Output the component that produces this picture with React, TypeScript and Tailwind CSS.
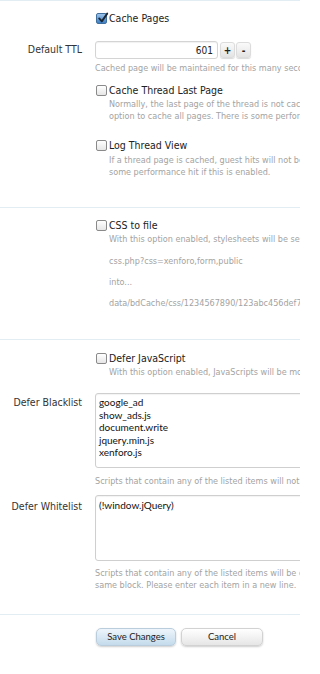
import React from "react";

const UI = "font-[family-name:'DejaVu_Sans_Condensed','DejaVu_Sans',sans-serif] font-stretch-condensed";
const HUM = "font-[family-name:Lato,'Open_Sans',sans-serif]";

function Box({ checked = false }: { checked?: boolean }) {
  return (
    <span
      className={
        "relative ml-[1px] inline-block h-[11px] w-[11px] shrink-0 rounded-[2px] border " +
        (checked
          ? "border-[#3f6f9f] bg-gradient-to-b from-[#9cc3ea] to-[#3f7fc4]"
          : "border-[#8a8a8a] bg-gradient-to-b from-white to-[#e6e6e6]")
      }
    >
      {checked && (
        <svg viewBox="0 0 12 12" className="absolute left-[0px] top-[-2px] h-[12px] w-[12px]">
          <path d="M2.2 6.4 L4.8 9.4 L10.2 1.6" fill="none" stroke="#1b2733" strokeWidth="1.9" strokeLinecap="round" strokeLinejoin="round" />
        </svg>
      )}
    </span>
  );
}

function CheckRow({ label, checked }: { label: string; checked?: boolean }) {
  return (
    <div className="flex h-[13px] items-center gap-[2px] whitespace-nowrap pl-[95px] text-[10.5px] leading-[13px] text-[#222]">
      <Box checked={checked} />
      <span>{label}</span>
    </div>
  );
}

function Desc({ lines, className = "" }: { lines: string[]; className?: string }) {
  return (
    <div className={"whitespace-nowrap pl-[109px] text-[9px] leading-[12px] text-[#a3a3a3] " + className}>
      {lines.map((l) => (
        <div key={l} className="h-[12px]">{l}</div>
      ))}
    </div>
  );
}

function Sep({ className = "" }: { className?: string }) {
  return <div className={"h-px w-full bg-[#e2ecf3] " + className} />;
}

export default function App() {
  return (
    <div className={"h-[674px] w-[300px] overflow-hidden bg-white " + UI}>
      <div className="w-[300px]">
        <Sep />
        <div className="pt-[11px]">
          <CheckRow label="Cache Pages" checked />
          <div className="mt-[16px] flex h-[18px] items-center whitespace-nowrap">
            <div className="w-[82px] shrink-0 text-right text-[10.5px] text-[#333]">Default TTL</div>
            <div className="ml-[13px] flex items-center">
              <div className="flex h-[18px] w-[123px] items-center justify-end rounded-[3px] border border-[#d4d4d4] bg-white pr-[4px] text-[10px] text-[#222] shadow-[inset_0_1px_1px_rgba(0,0,0,0.06)]">
                601
              </div>
              <div className="ml-[2px] flex h-[16px] w-[15px] items-center justify-center rounded-[3px] border border-[#dcdcdc] bg-gradient-to-b from-[#fafafa] to-[#e4e4e4] text-[10px] font-bold text-[#222] shadow-[0_1px_1px_rgba(0,0,0,0.15)]">
                +
              </div>
              <div className="ml-[1px] flex h-[16px] w-[15px] items-center justify-center rounded-[3px] border border-[#dcdcdc] bg-gradient-to-b from-[#fafafa] to-[#e4e4e4] text-[10px] font-bold text-[#222] shadow-[0_1px_1px_rgba(0,0,0,0.15)]">
                -
              </div>
            </div>
          </div>
          <div className="mt-[4px] h-[10px] whitespace-nowrap pl-[95px] text-[9px] leading-[10px] text-[#a3a3a3]">
            Cached page will be maintained for this many seconds.
          </div>
          <div className="mt-[11px]">
            <CheckRow label="Cache Thread Last Page" />
          </div>
          <Desc
            className="mt-[1px]"
            lines={[
              "Normally, the last page of the thread is not cached because it changes frequently. Enable this",
              "option to cache all pages. There is some performance hit if this is enabled.",
            ]}
          />
          <div className="mt-[17px]">
            <CheckRow label="Log Thread View" />
          </div>
          <Desc
            className="mt-[2px]"
            lines={[
              "If a thread page is cached, guest hits will not be logged. Enable this option to log them. There is",
              "some performance hit if this is enabled.",
            ]}
          />
        </div>
        <Sep className="mt-[29px]" />

        <div className="mt-[11px]">
          <CheckRow label="CSS to file" />
        </div>
        <Desc className="mt-[1px]" lines={["With this option enabled, stylesheets will be served as static files instead of"]} />
        <Desc className="mt-[10px]" lines={["css.php?css=xenforo,form,public"]} />
        <Desc className="mt-[9px]" lines={["into..."]} />
        <Desc className="mt-[9px]" lines={["data/bdCache/css/1234567890/123abc456def7890.css"]} />
        <Sep className="mt-[30px]" />

        <div className="mt-[12px]">
          <CheckRow label="Defer JavaScript" />
        </div>
        <Desc className="mt-[1px]" lines={["With this option enabled, JavaScripts will be moved to the end of the page."]} />

        <div className="mt-[15px] flex whitespace-nowrap">
          <div className="w-[82px] shrink-0 pt-[3px] text-right text-[10.5px] leading-[12px] text-[#333]">Defer Blacklist</div>
          <div
            className={
              "ml-[13px] h-[75px] w-[260px] shrink-0 rounded-[3px] border border-[#cfcfcf] bg-white pl-[3px] pt-[2px] text-[10px] leading-[12.5px] text-[#111] shadow-[inset_0_1px_1px_rgba(0,0,0,0.05)] " +
              HUM
            }
          >
            <div>google_ad</div>
            <div>show_ads.js</div>
            <div>document.write</div>
            <div>jquery.min.js</div>
            <div>xenforo.js</div>
          </div>
        </div>
        <div className="mt-[8px] h-[10px] whitespace-nowrap pl-[95px] text-[9px] leading-[10px] text-[#a3a3a3]">
          Scripts that contain any of the listed items will not be deferred.
        </div>

        <div className="mt-[9px] flex whitespace-nowrap">
          <div className="w-[82px] shrink-0 pt-[5px] text-right text-[10.5px] leading-[12px] text-[#333]">Defer Whitelist</div>
          <div
            className={
              "ml-[13px] h-[66px] w-[260px] shrink-0 rounded-[3px] border border-[#cfcfcf] bg-white pl-[3px] pt-[3px] text-[10px] leading-[12.5px] text-[#111] shadow-[inset_0_1px_1px_rgba(0,0,0,0.05)] " +
              HUM
            }
          >
            <div>(!window.jQuery)</div>
          </div>
        </div>
        <div className="mt-[6px] whitespace-nowrap pl-[95px] text-[9px] leading-[12px] text-[#a3a3a3]">
          <div className="h-[12px]">Scripts that contain any of the listed items will be deferred even if they are in the</div>
          <div className="h-[12px]">same block. Please enter each item in a new line.</div>
        </div>
        <Sep className="mt-[23px]" />

        <div className={"mt-[13px] flex gap-[5px] pl-[96px] " + HUM}>
          <div className="flex h-[18px] w-[80px] items-center justify-center rounded-[5px] border border-[#b9cddc] bg-gradient-to-b from-[#eef5fb] to-[#c4dbec] text-[9.5px] text-[#222] shadow-[0_1px_2px_rgba(0,0,0,0.2)]">
            Save Changes
          </div>
          <div className="flex h-[18px] w-[82px] items-center justify-center rounded-[5px] border border-[#d2d2d2] bg-gradient-to-b from-white to-[#e6e6e6] text-[9.5px] text-[#222] shadow-[0_1px_2px_rgba(0,0,0,0.2)]">
            Cancel
          </div>
        </div>
      </div>
    </div>
  );
}
